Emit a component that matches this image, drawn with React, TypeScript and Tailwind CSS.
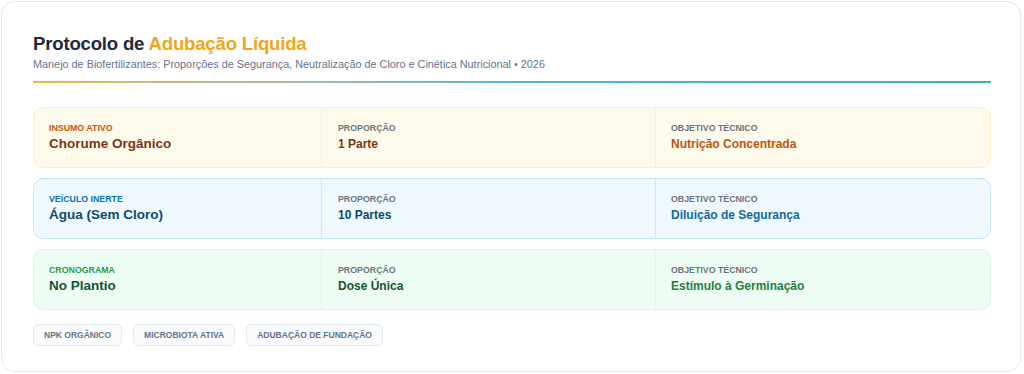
const ROWS = [
  {
    label: "Insumo Ativo",
    value: "Chorume Orgânico",
    ratio: "1 Parte",
    goal: "Nutrição Concentrada",
    box: "bg-[#fefaeb] border-[#fbefc8]",
    divider: "border-[#f8efd6]",
    labelClass: "text-[#c2570c]",
    valueClass: "text-[#7a3412]",
    goalClass: "text-[#b9560f]",
  },
  {
    label: "Veículo Inerte",
    value: "Água (Sem Cloro)",
    ratio: "10 Partes",
    goal: "Diluição de Segurança",
    box: "bg-[#eff8fe] border-[#c3e5f6]",
    divider: "border-[#cfe7f3]",
    labelClass: "text-[#0a73ad]",
    valueClass: "text-[#0d4a6e]",
    goalClass: "text-[#0f6b98]",
  },
  {
    label: "Cronograma",
    value: "No Plantio",
    ratio: "Dose Única",
    goal: "Estímulo à Germinação",
    box: "bg-[#eefdf4] border-[#d7f5e2]",
    divider: "border-[#dff5e8]",
    labelClass: "text-[#1f9a4c]",
    valueClass: "text-[#15532e]",
    goalClass: "text-[#1f7f3f]",
  },
];

const TAGS = ["NPK Orgânico", "Microbiota Ativa", "Adubação de Fundação"];

function Field({ label, value, labelClass, valueClass }: { label: string; value: string; labelClass: string; valueClass: string }) {
  return (
    <div className="flex flex-col">
      <span className={`text-[8.8px] font-bold uppercase leading-[11px] ${labelClass}`}>{label}</span>
      <span className={`mt-[2px] font-bold leading-[16px] ${valueClass}`}>{value}</span>
    </div>
  );
}

function ProtocolRow(row: (typeof ROWS)[number]) {
  return (
    <div className={`grid h-[61px] grid-cols-[287px_334px_1fr] rounded-[10px] border ${row.box}`}>
      <div className="flex items-center pl-[15px]">
        <Field label={row.label} value={row.value} labelClass={row.labelClass} valueClass={`text-[13.5px] ${row.valueClass}`} />
      </div>
      <div className={`flex items-center border-l pl-[16px] ${row.divider}`}>
        <Field label="Proporção" value={row.ratio} labelClass="text-[#6b7280]" valueClass={`text-[12px] ${row.valueClass}`} />
      </div>
      <div className={`flex items-center border-l pl-[15px] ${row.divider}`}>
        <Field label="Objetivo Técnico" value={row.goal} labelClass="text-[#6b7280]" valueClass={`text-[12px] ${row.goalClass}`} />
      </div>
    </div>
  );
}

export default function App() {
  return (
    <div className="h-[374px] w-[1024px] bg-white p-[1px] pr-[3px] font-['Liberation_Sans',Arial,sans-serif]">
      <div className="h-[371px] rounded-[14px] border border-[#e5e7eb] bg-white pl-[31px] pr-[29px] pt-[30px]">
        <h1 className="text-[18.6px] font-bold leading-[24px] tracking-[-0.2px] text-[#1e293b]">
          Protocolo de <span className="text-[#f0a51c]">Adubação Líquida</span>
        </h1>
        <p className="mt-[1px] text-[10.85px] leading-[14px] text-[#64748b]">
          Manejo de Biofertilizantes: Proporções de Segurança, Neutralização de Cloro e Cinética Nutricional • 2026
        </p>
        <div className="mt-[10px] h-[2px] bg-gradient-to-r from-[#eeb53a] via-[#4fb6d8] to-[#3cb8a0]" />
        <div className="mt-[24px] flex flex-col gap-[10px]">
          {ROWS.map((row) => (
            <ProtocolRow key={row.label} {...row} />
          ))}
        </div>
        <div className="mt-[14px] flex gap-[11px]">
          {TAGS.map((tag) => (
            <span
              key={tag}
              className="rounded-[5px] border border-[#e2e8f0] bg-[#f8fafc] px-[10px] py-[5px] text-[8.5px] font-bold uppercase leading-[10px] text-[#64748b]"
            >
              {tag}
            </span>
          ))}
        </div>
      </div>
    </div>
  );
}
